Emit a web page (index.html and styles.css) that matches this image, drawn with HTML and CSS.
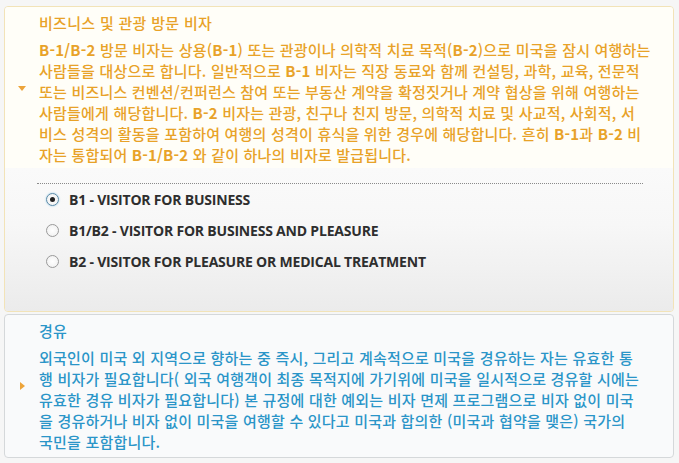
FILE: index.html
```html
<!DOCTYPE html>
<html lang="ko">
<head>
<meta charset="utf-8">
<link rel="stylesheet" href="styles.css">
</head>
<body>
<div class="wrap">
  <div class="item item-open">
    <div class="head head-open">
      <span class="arrow arrow-down"></span>
      <div class="head-text">
        <div class="title">비즈니스 및 관광 방문 비자</div>
        <div class="desc"><b>B-1/B-2</b> 방문 비자는 상용(<b>B-1</b>) 또는 관광이나 의학적 치료 목적(<b>B-2</b>)으로 미국을 잠시 여행하는<br>사람들을 대상으로 합니다. 일반적으로 <b>B-1</b> 비자는 직장 동료와 함께 컨설팅, 과학, 교육, 전문적<br>또는 비즈니스 컨벤션/컨퍼런스 참여 또는 부동산 계약을 확정짓거나 계약 협상을 위해 여행하는<br>사람들에게 해당합니다. <b>B-2</b> 비자는 관광, 친구나 친지 방문, 의학적 치료 및 사교적, 사회적, 서<br>비스 성격의 활동을 포함하여 여행의 성격이 휴식을 위한 경우에 해당합니다. 흔히 <b>B-1</b>과 <b>B-2</b> 비<br>자는 통합되어 <b>B-1/B-2</b> 와 같이 하나의 비자로 발급됩니다.</div>
      </div>
    </div>
    <div class="content">
      <div class="rule"></div>
      <label class="opt"><span class="radio radio-on"></span><span>B1 - VISITOR FOR BUSINESS</span></label>
      <label class="opt"><span class="radio"></span><span>B1/B2 - VISITOR FOR BUSINESS AND PLEASURE</span></label>
      <label class="opt"><span class="radio"></span><span>B2 - VISITOR FOR PLEASURE OR MEDICAL TREATMENT</span></label>
    </div>
  </div>
  <div class="item item-closed">
    <div class="head head-closed">
      <span class="arrow arrow-right"></span>
      <div class="head-text">
        <div class="title">경유</div>
        <div class="desc">외국인이 미국 외 지역으로 향하는 중 즉시, 그리고 계속적으로 미국을 경유하는 자는 유효한 통<br>행 비자가 필요합니다( 외국 여행객이 최종 목적지에 가기위에 미국을 일시적으로 경유할 시에는<br>유효한 경유 비자가 필요합니다) 본 규정에 대한 예외는 비자 면제 프로그램으로 비자 없이 미국<br>을 경유하거나 비자 없이 미국을 여행할 수 있다고 미국과 합의한 (미국과 협약을 맺은) 국가의<br>국민을 포함합니다.</div>
      </div>
    </div>
  </div>
</div>
</body>
</html>
```
FILE: styles.css
```css
html, body {
  margin: 0;
  padding: 0;
  background: #f6f6f6;
}
body {
  font-family: "Noto Sans CJK KR", "Noto Sans", sans-serif;
}
.wrap {
  padding: 6px 5px 0 4px;
  display: flex;
  flex-direction: column;
  gap: 2px;
}
.item {
  border-radius: 4px;
  overflow: hidden;
}
.item-open {
  border: 1px solid #f2e3b8;
}
.item-closed {
  border: 1px solid #d5d8da;
  background: #f9fafb;
}
.head {
  display: flex;
  align-items: center;
  padding-left: 13px;
}
.head-open {
  background: #fffef8;
  color: #e8a228;
  padding-top: 5px;
  padding-bottom: 3px;
  height: 153px;
  box-sizing: content-box;
}
.head-closed {
  color: #2a95c8;
  padding-top: 5px;
  padding-bottom: 5px;
}
.arrow {
  width: 0;
  height: 0;
  flex: none;
}
.arrow-down {
  border-left: 4px solid transparent;
  border-right: 4px solid transparent;
  border-top: 5px solid #eda43a;
  margin-right: 13px;
}
.arrow-right {
  border-top: 4px solid transparent;
  border-bottom: 4px solid transparent;
  border-left: 5px solid #eda43a;
  margin-left: 2px;
  margin-right: 14px;
}
.head-text {
  display: flex;
  flex-direction: column;
  gap: 6px;
}
.title {
  font-size: 15px;
  line-height: 21px;
  font-weight: 500;
  letter-spacing: 0.3px;
}
.desc {
  font-size: 15px;
  line-height: 21px;
  font-weight: 500;
  letter-spacing: 0.2px;
  white-space: nowrap;
}
.desc b {
  font-weight: 700;
}
.content {
  background: linear-gradient(#fafafa 0%, #f7f7f7 40%, #ebebeb 100%);
  padding: 15px 30px 32px 32px;
  height: 96px;
  box-sizing: content-box;
}
.rule {
  border-top: 1px dotted #8a8a8a;
}
.opt {
  display: flex;
  align-items: center;
  gap: 10px;
  height: 31px;
  padding-left: 9px;
  font-family: "Open Sans", "DejaVu Sans", sans-serif;
  font-weight: 700;
  font-size: 14px;
  letter-spacing: -0.2px;
  color: #2e2e2e;
}
.radio {
  width: 11px;
  height: 11px;
  border-radius: 50%;
  border: 1px solid #9a9a9a;
  background: radial-gradient(circle, #ffffff 0%, #eeeeee 100%);
  flex: none;
  position: relative;
}
.radio-on {
  border-color: #5a8aa8;
  box-shadow: 0 0 2px #8cc8e8;
}
.radio-on::after {
  content: "";
  position: absolute;
  left: 3px;
  top: 3px;
  width: 5px;
  height: 5px;
  border-radius: 50%;
  background: #222;
}
```
